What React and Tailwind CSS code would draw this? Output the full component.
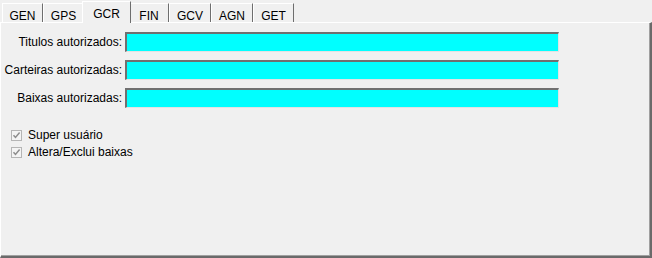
import React from "react";

const tabs = [
  { name: "GEN", w: "w-[41px]" },
  { name: "GPS", w: "w-[41px]" },
  { name: "GCR", w: "w-[45px]", active: true },
  { name: "FIN", w: "w-[40px]" },
  { name: "GCV", w: "w-[42px]" },
  { name: "AGN", w: "w-[42px]" },
  { name: "GET", w: "w-[41px]" },
];

const fields = ["Titulos autorizados:", "Carteiras autorizadas:", "Baixas autorizadas:"];
const checks = ["Super usuário", "Altera/Exclui baixas"];

function Check() {
  return (
    <span className="flex h-[11px] w-[11px] items-center justify-center border border-[#b5b5b5] bg-[#f4f4f4]">
      <svg width="9" height="9" viewBox="0 0 9 9">
        <path d="M1.5 4.2 L3.5 6.4 L7.6 1.6" fill="none" stroke="#8d8d8d" strokeWidth="1.5" />
      </svg>
    </span>
  );
}

export default function App() {
  return (
    <div
      className="flex h-[258px] w-[652px] flex-col bg-[#f0f0f0] text-[12px] text-[#000]"
      style={{ fontFamily: '"Liberation Sans", Arial, sans-serif' }}
    >
      <div className="flex h-[22px] items-end pl-[2px]">
        {tabs.map((t) =>
          t.active ? (
            <div
              key={t.name}
              className={`relative z-10 -mx-[2px] -mb-[1px] flex h-[22px] w-[49px] items-start justify-center border-l border-r border-t border-l-white border-t-white border-r-[#6e6e6e] bg-[#f0f0f0] pt-[3px]`}
            >
              {t.name}
            </div>
          ) : (
            <div
              key={t.name}
              className={`flex h-[19px] ${t.w} items-start justify-center border-l border-r border-t border-l-white border-t-white border-r-[#6e6e6e] pt-[3px]`}
            >
              {t.name}
            </div>
          )
        )}
      </div>
      <div className="flex flex-1 flex-col border-l border-t border-l-white border-t-white border-b-2 border-r-2 border-b-[#6a6a6a] border-r-[#6a6a6a]">
        <div className="flex flex-1 flex-col border-b border-r border-b-[#a0a0a0] border-r-[#a0a0a0]">
          <div className="mt-[9px] flex flex-col gap-[8px]">
            {fields.map((f) => (
              <div key={f} className="flex items-center">
                <div className="w-[121px] text-right">{f}</div>
                <div className="ml-[3px] h-[20px] w-[434px] border-l-2 border-t-2 border-b border-r border-l-[#707070] border-t-[#707070] border-b-[#e3e3e3] border-r-[#e3e3e3] bg-[#00ffff]" />
              </div>
            ))}
          </div>
          <div className="ml-[10px] mt-[21px] flex flex-col gap-[5px]">
            {checks.map((c) => (
              <div key={c} className="flex h-[12px] items-center gap-[6px]">
                <Check />
                <span>{c}</span>
              </div>
            ))}
          </div>
        </div>
      </div>
    </div>
  );
}
